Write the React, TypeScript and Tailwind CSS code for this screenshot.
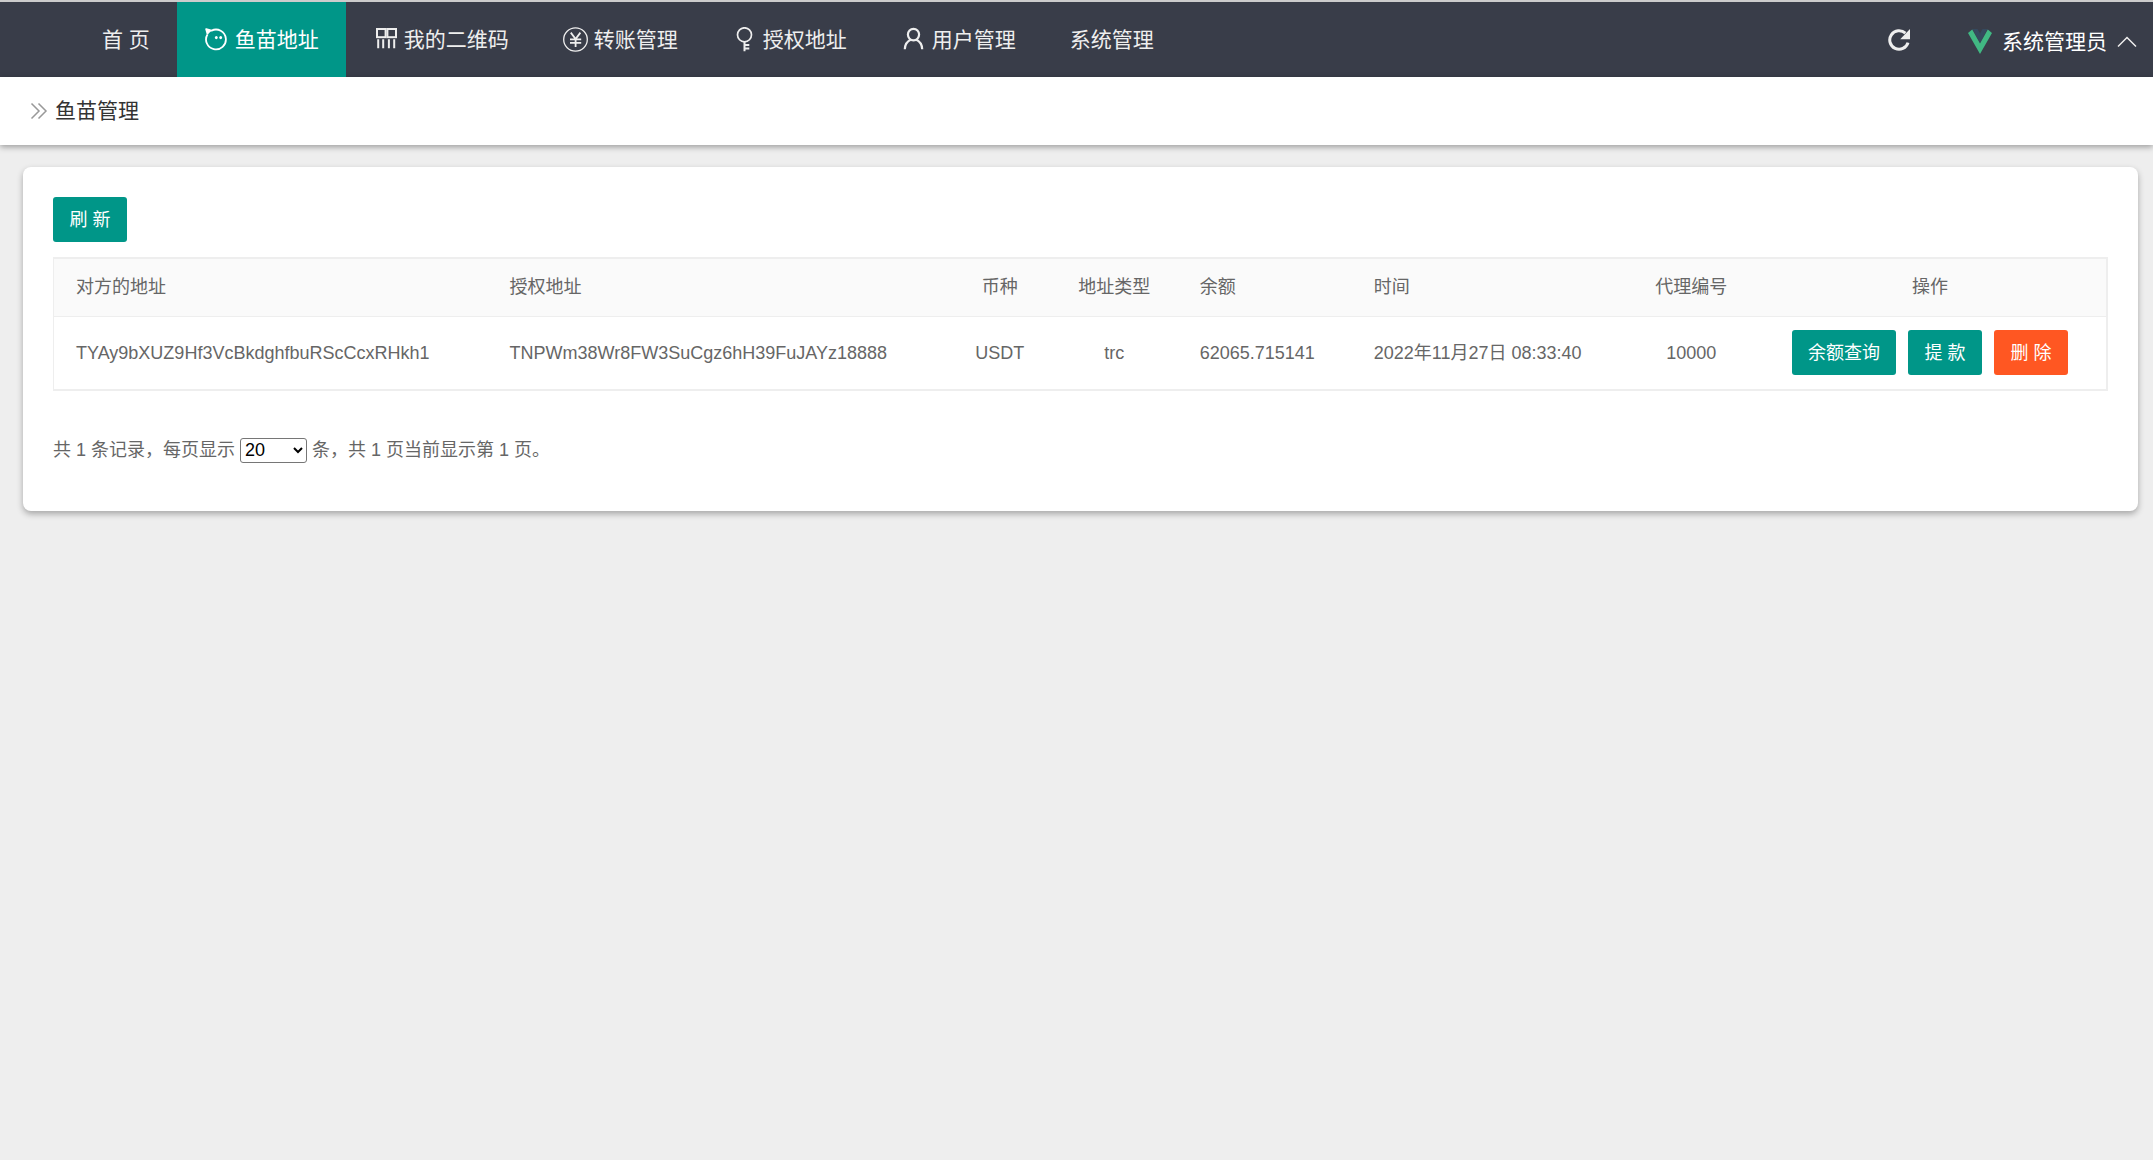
import React, { useState } from "react";

const iconProps = {
  viewBox: "0 0 25 25",
  fill: "none",
  stroke: "currentColor",
  "aria-hidden": true,
  className: "w-[25px] h-[25px] shrink-0",
};

function FishIcon() {
  return (
    <svg {...iconProps} strokeWidth="1.8">
      <path d="M3.600 7.200L2.200 2.200l5.400 1.400A9.900 9.900 0 1 1 3.600 7.200" strokeLinejoin="round" />
      <path d="M2 1.800l5.800 1.600-4 3.800z" fill="currentColor" stroke="none" />
      <ellipse cx="12.300" cy="10.600" rx="1.400" ry="1.700" fill="currentColor" stroke="none" />
      <ellipse cx="16.700" cy="10.600" rx="1.400" ry="1.700" fill="currentColor" stroke="none" />
    </svg>
  );
}

function QrIcon() {
  return (
    <svg {...iconProps} strokeWidth="2">
      <rect x="4" y="2" width="8.600" height="8.200" />
      <rect x="14.400" y="2" width="8.600" height="8.200" />
      <path d="M5.200 12.200v9M10.200 12.200v9M15.900 12.200v9M21.200 12.200v9" />
    </svg>
  );
}

function YenIcon() {
  return (
    <svg {...iconProps} strokeWidth="1.3">
      <ellipse cx="12.5" cy="12.5" rx="11.8" ry="11.6" />
      <path d="M7.8 5.600l4.800 6.400 4.800-6.400M12.600 12v8M7 12.400h11.200M7 15.800h11.200" strokeWidth="1.8" />
    </svg>
  );
}

function KeyIcon() {
  return (
    <svg {...iconProps} strokeWidth="1.7">
      <circle cx="12.5" cy="7.8" r="7" />
      <path d="M12.500 14.800v9.400M12.500 18h4.800M12.500 21.600h4.800" strokeWidth="2" />
    </svg>
  );
}

function UserIcon() {
  return (
    <svg {...iconProps} strokeWidth="2.2">
      <ellipse cx="12.5" cy="7.6" rx="5.6" ry="5.8" />
      <path d="M3.800 22.200c.2-4.400 2.400-7.900 6-9.400M21.200 22.200c-.2-4.400-2.400-7.900-6-9.400" />
    </svg>
  );
}

function RefreshIcon() {
  return (
    <svg viewBox="0 0 22 22" className="w-[22px] h-[22px]" aria-hidden="true">
      <path d="M20 13.600A9.300 9.300 0 1 1 17.400 4.200" fill="none" stroke="currentColor" strokeWidth="3" />
      <path d="M22 0v10.200H12.200z" fill="currentColor" />
    </svg>
  );
}

function VueLogo() {
  return (
    <svg viewBox="0 0 24 25" className="w-6 h-[25px]" aria-hidden="true">
      <path d="M4.500 0h5L12 4.400 14.500 0h5L12 14z" fill="#35495e" />
      <path d="M4.200.6L12 14.400 19.800.6 24 4 12 25 0 4z" fill="#41b883" />
    </svg>
  );
}

const menus = [
  { name: "首 页" },
  { name: "鱼苗地址", icon: <FishIcon /> },
  { name: "我的二维码", icon: <QrIcon /> },
  { name: "转账管理", icon: <YenIcon /> },
  { name: "授权地址", icon: <KeyIcon /> },
  { name: "用户管理", icon: <UserIcon /> },
  { name: "系统管理" },
];

const columns = [
  { title: "对方的地址", align: "text-left", width: "w-[434px]" },
  { title: "授权地址", align: "text-left", width: "w-[461px]" },
  { title: "币种", align: "text-center", width: "w-[102px]" },
  { title: "地址类型", align: "text-center", width: "w-[127px]" },
  { title: "余额", align: "text-left", width: "w-[174px]" },
  { title: "时间", align: "text-left", width: "w-[277px]" },
  { title: "代理编号", align: "text-center", width: "w-[125px]" },
  { title: "操作", align: "text-center", width: "w-[353px]" },
];

const rows = [
  [
    "TYAy9bXUZ9Hf3VcBkdghfbuRScCcxRHkh1",
    "TNPWm38Wr8FW3SuCgz6hH39FuJAYz18888",
    "USDT",
    "trc",
    "62065.715141",
    "2022年11月27日 08:33:40",
    "10000",
  ],
];

function Btn({ children, danger }: { children: React.ReactNode; danger?: boolean }) {
  return (
    <button
      type="button"
      className={`h-[45px] min-w-[74px] px-4 rounded-[3px] text-white whitespace-nowrap cursor-pointer ${
        danger ? "bg-[#ff5722]" : "bg-[#009688]"
      }`}
    >
      {children}
    </button>
  );
}

export default function App() {
  const [active, setActive] = useState(1);
  const [size, setSize] = useState("20");

  return (
    <div className="min-h-screen bg-[#eee] text-[18px] leading-7 text-[#666] font-['Liberation_Sans','Noto_Sans_CJK_SC',sans-serif]">
      <header className="flex items-stretch justify-between h-[77px] pl-[75px] pr-4 border-t-2 border-[#ccc] bg-[#393d49] text-[21px] text-[#eee]">
        <nav className="flex">
          {menus.map((m, i) => (
            <a
              key={m.name}
              href="#"
              onClick={(e) => {
                e.preventDefault();
                setActive(i);
              }}
              className={`flex items-center gap-[6px] px-[27px] whitespace-nowrap ${
                i === active ? "bg-[#009688] text-white" : ""
              }`}
            >
              {m.icon}
              {m.name}
            </a>
          ))}
        </nav>
        <div className="flex items-center">
          <button type="button" aria-label="刷新页面" className="mr-[58px] cursor-pointer">
            <RefreshIcon />
          </button>
          <a href="#" className="flex items-center gap-[10px] pt-1 text-white whitespace-nowrap">
            <VueLogo />
            系统管理员
            <svg viewBox="0 0 20 12" className="w-5 h-3" aria-hidden="true">
              <path d="M1 10.500l9-9 9 9" fill="none" stroke="#eee" strokeWidth="1.5" />
            </svg>
          </a>
        </div>
      </header>

      <div className="flex items-center gap-[7px] h-[68px] px-[30px] bg-white text-[21px] text-[#333] shadow-[0_2px_6px_rgba(0,0,0,0.35)]">
        <svg viewBox="0 0 18 18" className="w-[18px] h-[18px]" aria-hidden="true">
          <path d="M1.500 1.500L9 9l-7.500 7.500M8.500 1.500L16 9l-7.500 7.500" fill="none" stroke="#999" strokeWidth="1.5" />
        </svg>
        鱼苗管理
      </div>

      <main className="mt-[22px] ml-[23px] mr-[15px] px-[30px] pt-[30px] pb-[47px] rounded-lg bg-white shadow-[0_3px_6px_rgba(0,0,0,0.3)]">
        <Btn>刷 新</Btn>
        <table className="mt-[15px] w-full table-fixed border-collapse border-2 border-l border-[#eee]">
          <thead>
            <tr className="h-[58px] bg-[#fafafa] border-b border-[#eee]">
              {columns.map((c) => (
                <th key={c.title} className={`px-[22px] font-normal whitespace-nowrap ${c.align} ${c.width}`}>
                  {c.title}
                </th>
              ))}
            </tr>
          </thead>
          <tbody>
            {rows.map((r) => (
              <tr key={r[0]} className="h-[74px]">
                {r.map((v, i) => (
                  <td key={i} className={`px-[22px] whitespace-nowrap ${columns[i].align}`}>
                    {v}
                  </td>
                ))}
                <td>
                  <div className="flex justify-center gap-3">
                    <Btn>余额查询</Btn>
                    <Btn>提 款</Btn>
                    <Btn danger>删 除</Btn>
                  </div>
                </td>
              </tr>
            ))}
          </tbody>
        </table>

        <div className="mt-[45px] flex items-center gap-[5px]">
          <label htmlFor="pageSize">共 1 条记录，每页显示</label>
          <select
            id="pageSize"
            value={size}
            onChange={(e) => setSize(e.target.value)}
            className="w-[67px] h-[25px] border border-[#767676] rounded-[3px] bg-white text-black leading-5"
          >
            <option>20</option>
            <option>50</option>
            <option>100</option>
          </select>
          <span>条，共 1 页当前显示第 1 页。</span>
        </div>
      </main>
    </div>
  );
}
